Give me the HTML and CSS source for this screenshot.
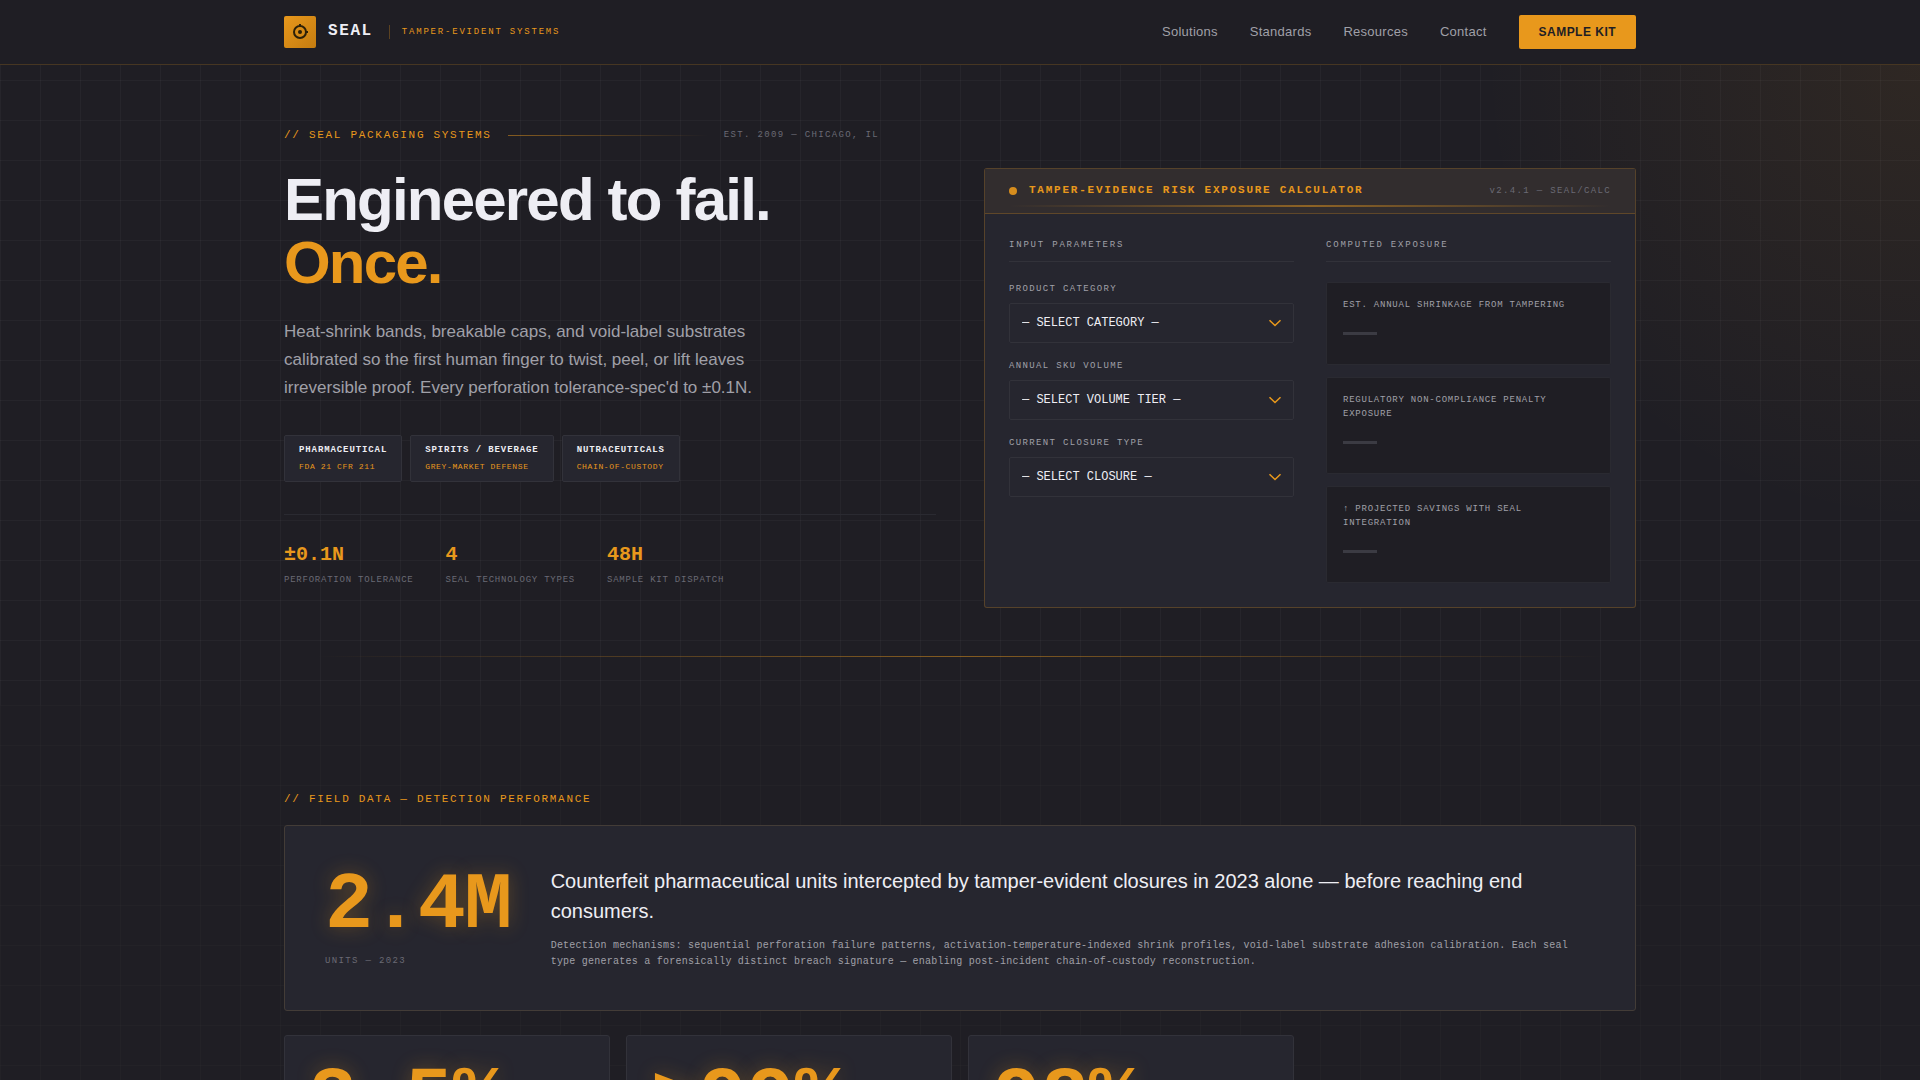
FILE: index.html
```html
<!DOCTYPE html>
<html lang="en">
<head>
  <meta charset="UTF-8">
  <meta name="viewport" content="width=device-width, initial-scale=1.0">
  <title>SEAL - Tamper-Evident Systems</title>
  <link rel="stylesheet" href="styles.css">
</head>
<body>
  <header class="site-header">
    <div class="container header-inner">
      <a class="brand" href="#">
        <span class="brand-mark">
          <svg width="18" height="18" viewBox="0 0 18 18" fill="none" stroke="#2c2008">
            <circle cx="9" cy="9" r="6" stroke-width="2"/>
            <circle cx="9" cy="9" r="2" fill="#2c2008" stroke="none"/>
            <path d="M9 1v3M14 9h3" stroke-width="2"/>
          </svg>
        </span>
        <span class="brand-name">SEAL</span>
        <span class="brand-tag">TAMPER-EVIDENT SYSTEMS</span>
      </a>
      <nav class="nav">
        <a href="#solutions">Solutions</a>
        <a href="#standards">Standards</a>
        <a href="#resources">Resources</a>
        <a href="#contact">Contact</a>
        <button type="button" class="btn">SAMPLE KIT</button>
      </nav>
    </div>
  </header>

  <main>
    <section class="hero">
      <div class="container hero-grid">
        <div class="hero-copy">
          <div class="eyebrow-row">
            <span class="eyebrow">// SEAL PACKAGING SYSTEMS</span>
            <span class="eyebrow-line"></span>
            <span class="est">EST. 2009 — CHICAGO, IL</span>
          </div>
          <h1>Engineered to fail.<br><span class="accent">Once.</span></h1>
          <p class="lead">Heat-shrink bands, breakable caps, and void-label substrates calibrated so the first human finger to twist, peel, or lift leaves irreversible proof. Every perforation tolerance-spec'd to ±0.1N.</p>
          <ul class="tags">
            <li><strong>PHARMACEUTICAL</strong><span>FDA 21 CFR 211</span></li>
            <li><strong>SPIRITS / BEVERAGE</strong><span>GREY-MARKET DEFENSE</span></li>
            <li><strong>NUTRACEUTICALS</strong><span>CHAIN-OF-CUSTODY</span></li>
          </ul>
          <dl class="specs">
            <div><dd>±0.1N</dd><dt>PERFORATION TOLERANCE</dt></div>
            <div><dd>4</dd><dt>SEAL TECHNOLOGY TYPES</dt></div>
            <div><dd>48H</dd><dt>SAMPLE KIT DISPATCH</dt></div>
          </dl>
        </div>

        <div class="calc">
          <div class="calc-header">
            <span class="dot"></span>
            <h2>TAMPER-EVIDENCE RISK EXPOSURE CALCULATOR</h2>
            <span class="version">v2.4.1 — SEAL/CALC</span>
          </div>
          <div class="calc-body">
            <form class="calc-col">
              <h3>INPUT PARAMETERS</h3>
              <div class="field">
                <label for="category">PRODUCT CATEGORY</label>
                <div class="select-wrap">
                  <select id="category">
                    <option>— SELECT CATEGORY —</option>
                    <option>Pharmaceutical</option>
                    <option>Spirits / Beverage</option>
                    <option>Nutraceuticals</option>
                  </select>
                  <svg width="14" height="8" viewBox="0 0 14 8"><path d="M1.5 1.2l5.5 5.3 5.5-5.3"/></svg>
                </div>
              </div>
              <div class="field">
                <label for="volume">ANNUAL SKU VOLUME</label>
                <div class="select-wrap">
                  <select id="volume">
                    <option>— SELECT VOLUME TIER —</option>
                  </select>
                  <svg width="14" height="8" viewBox="0 0 14 8"><path d="M1.5 1.2l5.5 5.3 5.5-5.3"/></svg>
                </div>
              </div>
              <div class="field">
                <label for="closure">CURRENT CLOSURE TYPE</label>
                <div class="select-wrap">
                  <select id="closure">
                    <option>— SELECT CLOSURE —</option>
                  </select>
                  <svg width="14" height="8" viewBox="0 0 14 8"><path d="M1.5 1.2l5.5 5.3 5.5-5.3"/></svg>
                </div>
              </div>
            </form>
            <div class="calc-col">
              <h3>COMPUTED EXPOSURE</h3>
              <div class="output">
                <p>EST. ANNUAL SHRINKAGE FROM TAMPERING</p>
                <span class="empty"></span>
              </div>
              <div class="output">
                <p>REGULATORY NON-COMPLIANCE PENALTY EXPOSURE</p>
                <span class="empty"></span>
              </div>
              <div class="output">
                <p>↑ PROJECTED SAVINGS WITH SEAL INTEGRATION</p>
                <span class="empty"></span>
              </div>
            </div>
          </div>
        </div>
      </div>
      <div class="container"><div class="divider"></div></div>
    </section>

    <section class="field-data">
      <div class="container">
        <h2 class="eyebrow">// FIELD DATA — DETECTION PERFORMANCE</h2>
        <div class="feature">
          <div class="feature-stat">
            <div class="big">2.4M</div>
            <div class="unit">UNITS — 2023</div>
          </div>
          <div class="feature-text">
            <p class="headline">Counterfeit pharmaceutical units intercepted by tamper-evident closures in 2023 alone — before reaching end consumers.</p>
            <p class="detail">Detection mechanisms: sequential perforation failure patterns, activation-temperature-indexed shrink profiles, void-label substrate adhesion calibration. Each seal type generates a forensically distinct breach signature — enabling post-incident chain-of-custody reconstruction.</p>
          </div>
        </div>
        <div class="stats">
          <div class="stat"><div class="big">3.5%</div></div>
          <div class="stat"><div class="big">&gt;99%</div></div>
          <div class="stat"><div class="big">98%</div></div>
        </div>
      </div>
    </section>
  </main>
</body>
</html>
```
FILE: styles.css
```css
:root {
  --bg: #1f1e24;
  --card: #26262f;
  --amber: #e8981c;
  --amber-border: rgba(232, 152, 28, 0.25);
  --line: #32323a;
  --text: #eeeef4;
  --muted: #a0a0a8;
  --dim: #6a6a74;
  --sans: "Liberation Sans", Arial, sans-serif;
  --mono: "Liberation Mono", "Courier New", monospace;
}
* {
  box-sizing: border-box;
  margin: 0;
  padding: 0;
}
body {
  background: var(--bg);
  color: var(--text);
  font-family: var(--sans);
  line-height: 1.6;
}
a {
  color: inherit;
  text-decoration: none;
}
.container {
  width: 100%;
  max-width: 1400px;
  margin: 0 auto;
  padding: 0 24px;
}

/* header */
.site-header {
  position: sticky;
  top: 0;
  z-index: 10;
  background: var(--bg);
  border-bottom: 1px solid rgba(232, 152, 28, 0.2);
}
.header-inner {
  display: flex;
  align-items: center;
  justify-content: space-between;
  height: 64px;
}
.brand {
  display: flex;
  align-items: center;
}
.brand-mark {
  display: flex;
  align-items: center;
  justify-content: center;
  width: 32px;
  height: 32px;
  border-radius: 2px;
  background: linear-gradient(135deg, #e8981c, #c47c10);
}
.brand-name {
  margin-left: 12px;
  font-family: var(--mono);
  font-size: 16px;
  font-weight: 700;
  letter-spacing: 0.1em;
}
.brand-tag {
  margin-left: 16px;
  padding-left: 12px;
  border-left: 1px solid rgba(232, 152, 28, 0.3);
  font-family: var(--mono);
  font-size: 9px;
  line-height: 14px;
  letter-spacing: 0.2em;
  color: var(--amber);
}
.nav {
  display: flex;
  align-items: center;
  gap: 32px;
  font-size: 13px;
  letter-spacing: 0.02em;
  color: var(--muted);
}
.btn {
  height: 34px;
  padding: 0 20px;
  border: 0;
  border-radius: 2px;
  background: var(--amber);
  color: var(--bg);
  font-family: var(--sans);
  font-size: 12px;
  font-weight: 700;
  letter-spacing: 0.04em;
}

/* hero */
.hero {
  padding: 60px 0 48px;
  background-image:
    radial-gradient(ellipse 440px 460px at 100% 0, rgba(232, 152, 28, 0.08), transparent),
    linear-gradient(rgba(255, 255, 255, 0.03) 1px, transparent 1px),
    linear-gradient(90deg, rgba(255, 255, 255, 0.03) 1px, transparent 1px);
  background-size: auto, 40px 40px, 40px 40px;
  background-position: 0 0, 0 15px, 0 0;
}
.hero-grid {
  display: grid;
  grid-template-columns: 1fr 1fr;
  gap: 48px;
  align-items: start;
}
.eyebrow-row {
  display: flex;
  align-items: center;
  max-width: 595px;
}
.eyebrow {
  font-family: var(--mono);
  font-size: 11px;
  font-weight: 400;
  line-height: 20px;
  letter-spacing: 0.155em;
  color: var(--amber);
}
.eyebrow-line {
  flex: 1;
  height: 1px;
  margin: 0 16px;
  background: linear-gradient(90deg, rgba(232, 152, 28, 0.5), transparent);
}
.est {
  font-family: var(--mono);
  font-size: 9px;
  line-height: 20px;
  letter-spacing: 0.15em;
  color: var(--dim);
}
h1 {
  margin-top: 23px;
  font-size: 60px;
  line-height: 63px;
  letter-spacing: -0.03em;
}
.accent {
  color: var(--amber);
}
.lead {
  max-width: 480px;
  margin-top: 24px;
  font-size: 17px;
  line-height: 28px;
  color: var(--muted);
}
.tags {
  display: flex;
  gap: 8px;
  margin-top: 33px;
  list-style: none;
  font-family: var(--mono);
}
.tags li {
  padding: 6px 14px;
  border: 1px solid var(--line);
  border-radius: 2px;
  background: var(--card);
}
.tags strong,
.tags span {
  display: block;
  line-height: 17px;
}
.tags strong {
  font-size: 9px;
  letter-spacing: 0.1em;
}
.tags span {
  font-size: 8px;
  line-height: 16px;
  letter-spacing: 0.08em;
  color: var(--amber);
}
.specs {
  display: flex;
  gap: 32px;
  margin-top: 32px;
  padding-top: 24px;
  border-top: 1px solid #2a2a31;
  font-family: var(--mono);
}
.specs dd {
  font-size: 20px;
  font-weight: 700;
  line-height: 32px;
  color: var(--amber);
}
.specs dt {
  font-size: 9px;
  line-height: 18px;
  letter-spacing: 0.085em;
  color: var(--dim);
}

/* calculator */
.calc {
  margin-top: 43px;
  border: 1px solid var(--amber-border);
  border-radius: 3px;
  background: var(--card);
  font-family: var(--mono);
}
.calc-header {
  position: relative;
  display: flex;
  align-items: center;
  height: 45px;
  padding: 0 24px;
  border-bottom: 1px solid var(--amber-border);
  background: #322d2e;
}
.calc-header::after {
  content: "";
  position: absolute;
  left: 24px;
  right: 24px;
  bottom: 6px;
  height: 2px;
  background: linear-gradient(90deg, transparent, rgba(232, 152, 28, 0.5), transparent);
}
.dot {
  width: 8px;
  height: 8px;
  border-radius: 50%;
  background: #d68d1d;
}
.calc-header h2 {
  margin-left: 12px;
  font-size: 11px;
  letter-spacing: 0.16em;
  color: var(--amber);
}
.version {
  margin-left: auto;
  font-size: 9px;
  letter-spacing: 0.15em;
  color: var(--dim);
}
.calc-body {
  display: grid;
  grid-template-columns: 1fr 1fr;
  gap: 32px;
  padding: 24px;
}
.calc-col h3 {
  margin-bottom: 20px;
  padding-bottom: 8px;
  border-bottom: 1px solid var(--line);
  font-size: 9px;
  font-weight: 400;
  line-height: 15px;
  letter-spacing: 0.2em;
  color: var(--muted);
}
.field {
  margin-bottom: 16px;
}
.field label {
  display: block;
  margin-bottom: 6px;
  font-size: 9px;
  line-height: 15px;
  letter-spacing: 0.15em;
  color: var(--muted);
}
.select-wrap {
  position: relative;
}
.select-wrap select {
  display: block;
  width: 100%;
  height: 40px;
  padding: 0 12px;
  border: 1px solid var(--line);
  border-radius: 2px;
  background: var(--card);
  color: var(--text);
  font-family: var(--mono);
  font-size: 12px;
  appearance: none;
}
.select-wrap svg {
  position: absolute;
  top: 16px;
  right: 12px;
  fill: none;
  stroke: var(--amber);
  stroke-width: 1.5;
  pointer-events: none;
}
.output {
  margin-bottom: 12px;
  padding: 15px 16px 14px;
  border: 1px solid #2a2a31;
  border-radius: 2px;
  background: var(--bg);
}
.output:last-child {
  margin-bottom: 0;
}
.output p {
  font-size: 9px;
  line-height: 14px;
  letter-spacing: 0.085em;
  color: var(--muted);
}
.empty {
  display: block;
  width: 34px;
  height: 3px;
  margin: 20px 0 15px;
  background: #3b3b43;
}
.divider {
  height: 1px;
  margin: 48px 32px 0;
  background: linear-gradient(90deg, transparent, rgba(232, 152, 28, 0.5), transparent);
}

/* field data */
.field-data {
  padding: 84px 0 96px;
  background-image:
    linear-gradient(rgba(255, 255, 255, 0.015) 1px, transparent 1px),
    linear-gradient(90deg, rgba(255, 255, 255, 0.015) 1px, transparent 1px);
  background-size: 40px 40px;
}
.feature {
  display: flex;
  gap: 40px;
  margin-top: 16px;
  padding: 40px;
  border: 1px solid #433c37;
  border-radius: 3px;
  background: var(--card);
}
.big {
  font-family: var(--mono);
  font-size: 80px;
  font-weight: 700;
  line-height: 80px;
  letter-spacing: -0.02em;
  color: var(--amber);
  text-shadow: 0 0 20px rgba(232, 152, 28, 0.3);
}
.unit {
  margin-top: 8px;
  font-family: var(--mono);
  font-size: 9px;
  letter-spacing: 0.15em;
  color: var(--dim);
}
.headline {
  font-size: 20px;
  line-height: 30px;
}
.detail {
  margin-top: 12px;
  font-family: var(--mono);
  font-size: 10px;
  line-height: 16px;
  letter-spacing: 0.024em;
  color: var(--muted);
}
.stats {
  display: grid;
  grid-template-columns: repeat(4, 1fr);
  gap: 16px;
  margin-top: 24px;
}
.stat {
  min-height: 200px;
  padding: 24px;
  border: 1px solid var(--line);
  border-radius: 3px;
  background: var(--card);
}
.stat .big {
  letter-spacing: 0;
}
```
